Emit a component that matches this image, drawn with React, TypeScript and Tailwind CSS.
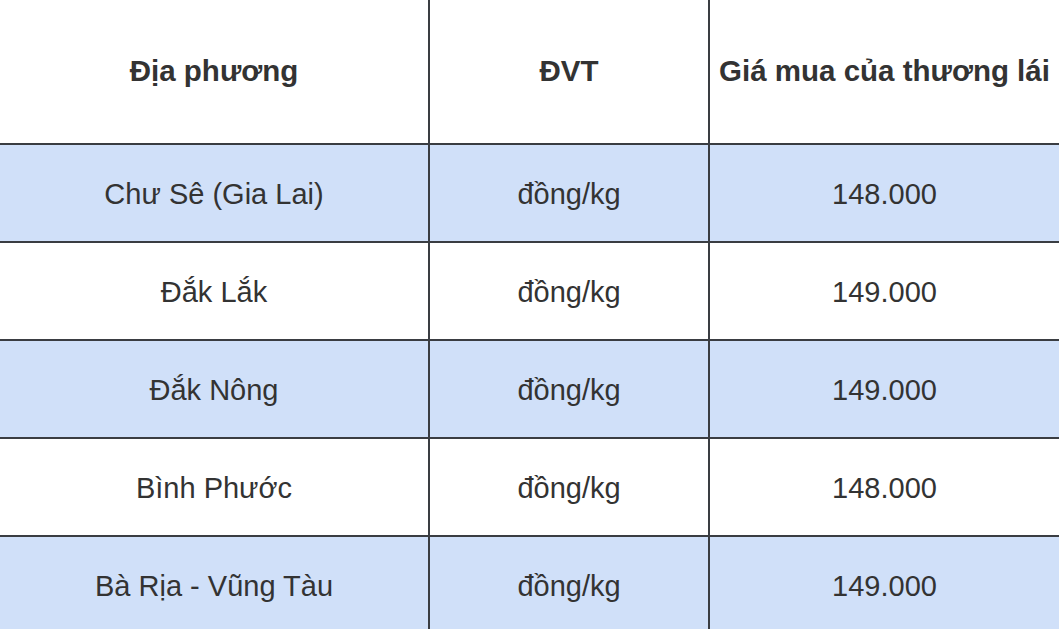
import React from 'react';

const rows = [
    { place: 'Chư Sê (Gia Lai)', unit: 'đồng/kg', price: '148.000' },
    { place: 'Đắk Lắk', unit: 'đồng/kg', price: '149.000' },
    { place: 'Đắk Nông', unit: 'đồng/kg', price: '149.000' },
    { place: 'Bình Phước', unit: 'đồng/kg', price: '148.000' },
    { place: 'Bà Rịa - Vũng Tàu', unit: 'đồng/kg', price: '149.000' },
];

const cell = 'flex items-center justify-center border-b-2 border-[#3a3d42]';

export default function App() {
    return (
        <div className="w-[1059px] h-[629px] overflow-hidden bg-white text-[#333] font-['Liberation_Sans',Arial,sans-serif]">
            <div className="grid grid-cols-[430px_280px_1fr]">
                {/* Header */}
                <div className={`${cell} h-[145px] border-r-2 text-[29.5px] font-bold`}>Địa phương</div>
                <div className={`${cell} h-[145px] border-r-2 text-[29.5px] font-bold`}>ĐVT</div>
                <div className={`${cell} h-[145px] text-[29.5px] font-bold whitespace-nowrap`}>Giá mua của thương lái</div>

                {/* Rows */}
                {rows.map((r, i) => {
                    const bg = i % 2 === 0 ? 'bg-[#d0e0f9]' : 'bg-white';
                    return (
                        <React.Fragment key={r.place}>
                            <div className={`${cell} ${bg} h-[98px] pt-[3px] border-r-2 text-[29px]`}>{r.place}</div>
                            <div className={`${cell} ${bg} h-[98px] pt-[3px] border-r-2 text-[29px]`}>{r.unit}</div>
                            <div className={`${cell} ${bg} h-[98px] pt-[3px] text-[29px]`}>{r.price}</div>
                        </React.Fragment>
                    );
                })}
            </div>
        </div>
    );
}
